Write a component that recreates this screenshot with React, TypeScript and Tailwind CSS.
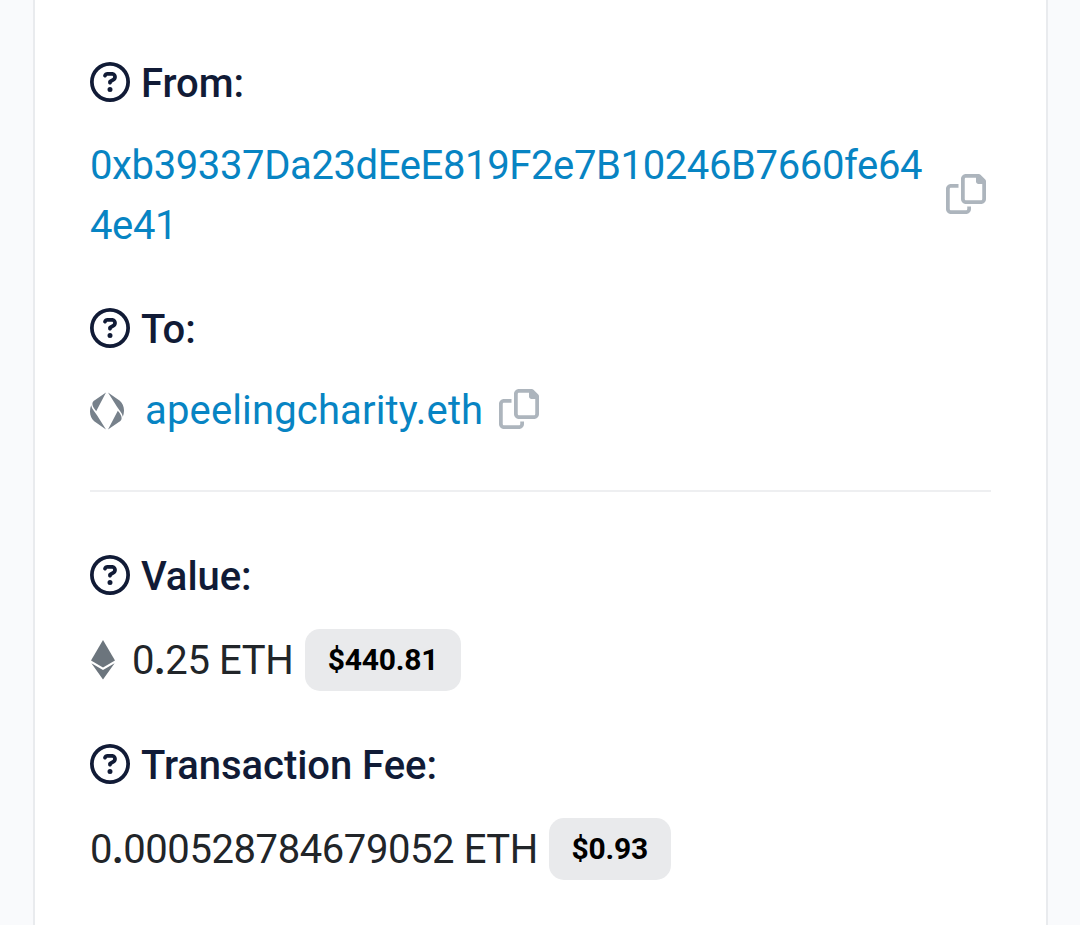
import { FaRegCircleQuestion } from "react-icons/fa6";

function Label({ text }: { text: string }) {
  return (
    <h3 className="flex h-15 items-center gap-[11px] font-medium tracking-[-0.05px] text-[#111b36]">
      <FaRegCircleQuestion className="size-10" />
      <span className="pt-1">{text}</span>
    </h3>
  );
}

function CopyIcon() {
  return (
    <svg className="size-10 shrink-0 text-[#adb5bd]" viewBox="0 0 512 512" fill="currentColor">
      <path d="M502.6 70.63l-61.25-61.25C435.4 3.371 427.2 0 418.7 0H256c-35.35 0-64 28.66-64 64v256c0 35.4 28.7 64 64 64h192c35.2 0 64-28.8 64-64V93.25c0-8.48-3.4-16.62-9.4-22.62zM464 320c0 8.836-7.164 16-16 16H256c-8.838 0-16-7.164-16-16V64.13c0-8.836 7.164-16 16-16h128V96c0 17.67 14.33 32 32 32h48v192zM272 448c0 8.836-7.164 16-16 16H64c-8.838 0-16-7.164-16-16V192.1c0-8.836 7.164-16 16-16h96V128H64c-35.35 0-64 28.65-64 64v256c0 35.3 28.66 64 64 64h192c35.2 0 64-28.8 64-64v-32h-48v32z" />
    </svg>
  );
}

function EnsIcon() {
  return (
    <svg className="mt-1 h-[38px] w-[34px]" viewBox="0 0 34 38" fill="#77818b">
      <path d="M16 0.5L6.2 19.2C3.8 16.5 2 13.5 2.4 11.3C2.7 9.8 3.5 9 4.7 8.2Z" />
      <path d="M1.2 13.2C1.7 17 4.8 19.6 7 23.2L16 37.5L4.2 29.2C-0.3 25.5 -1 18.5 1.2 13.2Z" />
      <path d="M18 37.5L27.8 18.8C30.2 21.5 32 24.5 31.6 26.7C31.3 28.2 30.5 29 29.3 29.8Z" />
      <path d="M32.8 24.8C32.3 21 29.2 18.4 27 14.8L18 0.5L29.8 8.8C34.3 12.5 35 19.5 32.8 24.8Z" />
    </svg>
  );
}

function EthIcon() {
  return (
    <svg className="ml-px h-10 w-6" viewBox="0 0 24 40" fill="#6c757d">
      <path d="M12 0L24 20.4L12 27.4L0 20.4Z" />
      <path d="M0.4 23.2L12 30L23.6 23.2L12 39.6Z" />
    </svg>
  );
}

function Badge({ text }: { text: string }) {
  return (
    <span className="flex h-[62px] items-center rounded-[15px] bg-[#e9eaec] px-[22.5px] text-[30px] font-bold tracking-[-0.2px] text-black">
      {text}
    </span>
  );
}

export default function App() {
  return (
    <div className="h-[925px] overflow-hidden bg-[#f9fafc] pr-8 pl-[33px] font-['Roboto',sans-serif] text-[40px] leading-[60px]">
      <main className="h-full border-x-2 border-[#e9ebee] bg-white px-[55px] pt-[52px]">
        {/* From */}
        <Label text="From:" />
        <div className="mt-[22px] flex h-[120px] items-center justify-between pr-[5px]">
          <a className="w-[840px] pt-1 tracking-[-0.38px] break-all text-[#0784c3]">
            0xb39337Da23dEeE819F2e7B10246B7660fe644e41
          </a>
          <CopyIcon />
        </div>

        {/* To */}
        <div className="mt-11">
          <Label text="To:" />
        </div>
        <div className="mt-[21px] flex h-15 items-center">
          <EnsIcon />
          <a className="mr-4 ml-[21px] pt-1 tracking-[0.15px] text-[#0784c3]">apeelingcharity.eth</a>
          <CopyIcon />
        </div>

        <hr className="mt-[51px] border-t-2 border-[#eeeff1]" />

        {/* Value */}
        <div className="mt-[53px]">
          <Label text="Value:" />
        </div>
        <div className="mt-6 flex h-[62px] items-center text-[#212529]">
          <EthIcon />
          <span className="mr-3 ml-[17px] pt-0.5 tracking-[-0.4px]">
            0<b className="font-bold">.</b>25 ETH
          </span>
          <Badge text="$440.81" />
        </div>

        {/* Fee */}
        <div className="mt-[43px]">
          <Label text="Transaction Fee:" />
        </div>
        <div className="mt-6 flex h-[62px] items-center text-[#212529]">
          <span className="mr-[11px] pt-0.5 tracking-[-0.42px]">
            0<b className="font-bold">.</b>000528784679052 ETH
          </span>
          <Badge text="$0.93" />
        </div>
      </main>
    </div>
  );
}
